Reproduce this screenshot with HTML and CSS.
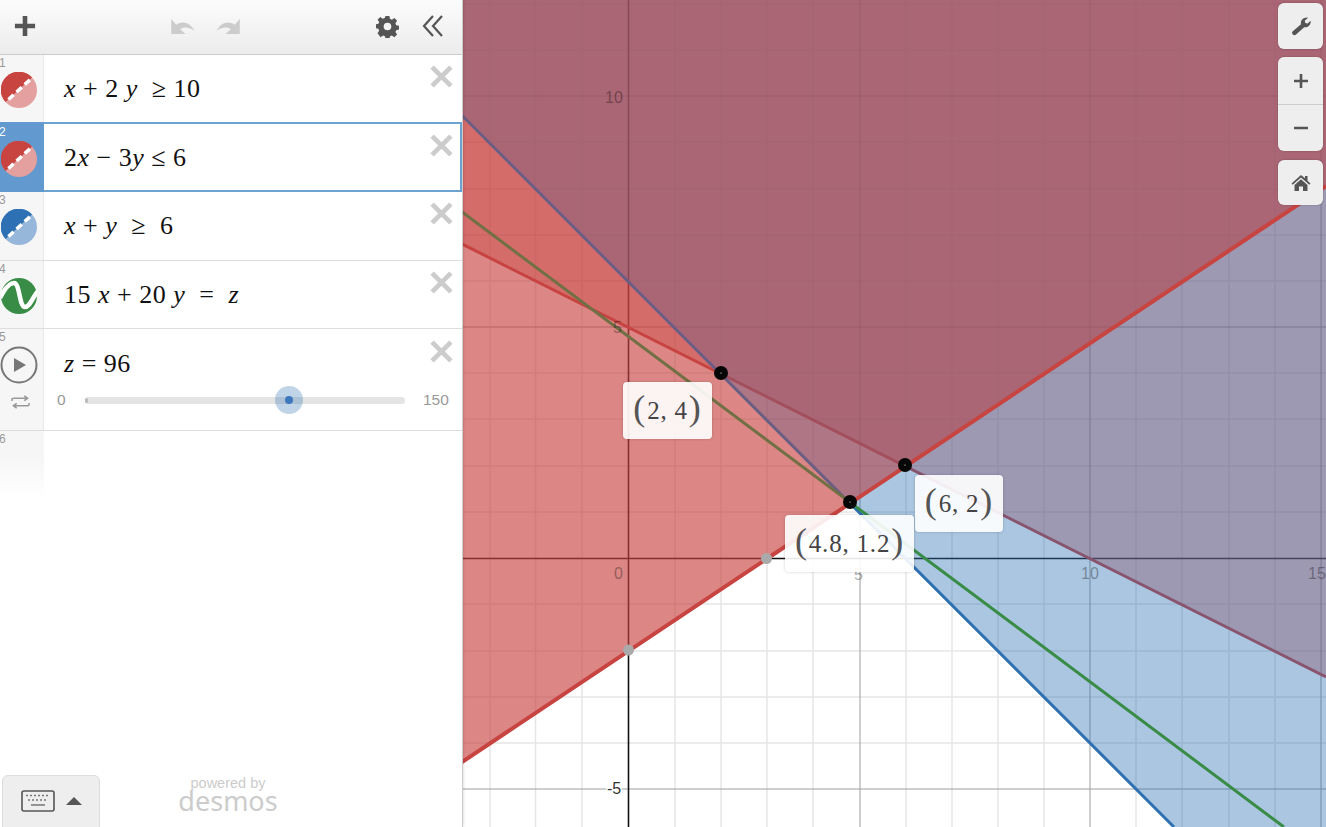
FILE: index.html
```html
<!DOCTYPE html>
<html lang="en">
<head>
<meta charset="utf-8">
<title>Desmos Graphing Calculator</title>
<link rel="stylesheet" href="styles.css">
</head>
<body>
<div class="app">
  <aside class="panel">
    <header class="toolbar">
      <svg class="ic add" viewBox="0 0 24 24"><path d="M9.500 1h5v8.500H23v5h-8.500V23h-5v-8.500H1v-5h8.500z"/></svg>
      <div class="undo">
        <svg class="ic hist" viewBox="0 0 28 18"><path d="M1 1v16h15l-5.500-5.200c3.500-2.800 9-2.500 15 1.700C22 6 13.500 1.800 6.300 7.200z"/></svg>
        <svg class="ic hist" viewBox="0 0 28 18"><path d="M27 1v16H12l5.500-5.200c-3.500-2.800-9-2.500-15 1.700C6 6 14.500 1.800 21.700 7.200z"/></svg>
      </div>
      <svg class="ic gear" viewBox="0 0 24 24"><path fill-rule="evenodd" d="M10 1h4l.6 3 2 .9 2.600-1.700 2.800 2.800-1.700 2.600.8 2 3 .6v4l-3 .6-.8 2 1.700 2.600-2.800 2.800-2.600-1.700-2 .8-.6 3h-4l-.6-3-2-.8-2.600 1.700L1.600 19l1.700-2.600-.8-2-3-.6v-4l3-.6.8-2L1.600 4.900l2.800-2.800L7 3.900l2-.9zM12 8a4 4 0 1 0 0 8 4 4 0 0 0 0-8z"/></svg>
      <svg class="ic collapse" viewBox="0 0 22 24"><path d="M11 2 2 12l9 10M20 2l-9 10 9 10"/></svg>
    </header>

    <section class="row">
      <div class="gutter"><span class="num">1</span>
        <svg class="swatch" viewBox="0 0 36 36"><circle cx="18" cy="18" r="18" fill="#e49f9f"/><path d="M4.500 30A18 18 0 0 1 31 5.500z" fill="#c74440"/><path d="M6 28.800 30 6.800" class="dash"/></svg>
      </div>
      <div class="expr"><span class="math"><i>x</i> + 2 <i>y</i> &nbsp;≥ 10</span></div>
      <svg class="close" viewBox="0 0 22 22"><path d="M2 2l18 18M20 2 2 20"/></svg>
    </section>

    <section class="row focus">
      <div class="gutter"><span class="num">2</span>
        <svg class="swatch" viewBox="0 0 36 36"><circle cx="18" cy="18" r="18" fill="#e49f9f"/><path d="M4.500 30A18 18 0 0 1 31 5.500z" fill="#c74440"/><path d="M6 28.800 30 6.800" class="dash"/></svg>
      </div>
      <div class="expr"><span class="math">2<i>x</i> − 3<i>y</i> ≤ 6</span></div>
      <svg class="close" viewBox="0 0 22 22"><path d="M2 2l18 18M20 2 2 20"/></svg>
    </section>

    <section class="row tall">
      <div class="gutter"><span class="num">3</span>
        <svg class="swatch" viewBox="0 0 36 36"><circle cx="18" cy="18" r="18" fill="#96b7d9"/><path d="M4.500 30A18 18 0 0 1 31 5.500z" fill="#2d70b3"/><path d="M6 28.800 30 6.800" class="dash"/></svg>
      </div>
      <div class="expr"><span class="math"><i>x</i> + <i>y</i> &nbsp;≥ &nbsp;6</span></div>
      <svg class="close" viewBox="0 0 22 22"><path d="M2 2l18 18M20 2 2 20"/></svg>
    </section>

    <section class="row">
      <div class="gutter"><span class="num">4</span>
        <svg class="swatch" viewBox="0 0 36 36"><circle cx="18" cy="18" r="18" fill="#388c46"/><path d="M-1 20C5 8 9 5 13 5c6 0 5 24 11 24 5 0 7-9 13-16" fill="none" stroke="#fff" stroke-width="4.500"/></svg>
      </div>
      <div class="expr"><span class="math">15 <i>x</i> + 20 <i>y</i> &nbsp;= &nbsp;<i>z</i></span></div>
      <svg class="close" viewBox="0 0 22 22"><path d="M2 2l18 18M20 2 2 20"/></svg>
    </section>

    <section class="row slider-row">
      <div class="gutter"><span class="num">5</span>
        <svg class="play" viewBox="0 0 38 38"><circle cx="19" cy="19" r="17.500"/><path d="M14 12v14l12-7z"/></svg>
        <svg class="loop" viewBox="0 0 20 14"><path d="M1 6V4.500C1 3.500 2 3 3 3h14M14 .5 17.500 3 14 5.500M19 8v1.500c0 1-1 1.500-2 1.500H3M6 8.500 2.500 11 6 13.500"/></svg>
      </div>
      <div class="expr slider-expr">
        <span class="math"><i>z</i> = 96</span>
        <div class="slider">
          <span class="lim lo">0</span>
          <div class="track"><span class="knob"></span></div>
          <span class="lim">150</span>
        </div>
      </div>
      <svg class="close" viewBox="0 0 22 22"><path d="M2 2l18 18M20 2 2 20"/></svg>
    </section>

    <section class="row empty">
      <div class="gutter"><span class="num">6</span></div>
    </section>

    <footer class="foot">
      <button class="kbd" type="button">
        <svg class="kbd-ic" viewBox="0 0 34 22"><rect x="1" y="1" width="32" height="20" rx="2"/><path class="keys" d="M5 5.500h2M9 5.500h2M13 5.500h2M17 5.500h2M21 5.500h2M25 5.500h2M7 10h2M11 10h2M15 10h2M19 10h2M23 10h2M10 15h14"/></svg>
        <span class="tri"></span>
      </button>
      <div class="brand"><span class="by">powered by</span><span class="name">desmos</span></div>
    </footer>
  </aside>

  <main class="graph">
    <svg class="plot" viewBox="0 0 863 827">
      <g class="minor">
        <path d="M27 0V827M72.500 0V827M119 0V827M212 0V827M258 0V827M304 0V827M350 0V827M443 0V827M489 0V827M535 0V827M581 0V827M673 0V827M719 0V827M766 0V827M812 0V827"/>
        <path d="M0 4H863M0 50H863M0 142H863M0 189H863M0 235H863M0 281H863M0 373H863M0 419H863M0 466H863M0 512H863M0 604H863M0 651H863M0 697H863M0 743H863"/>
      </g>
      <g class="major">
        <path d="M397 0V827M627 0V827M858 0V827M0 96H863M0 327H863M0 789H863"/>
      </g>
      <path class="axis" d="M165.500 0V827M0 558.500H863"/>
      <polygon class="sh red" points="0,762 863,186 863,0 0,0"/>
      <polygon class="sh red" points="0,244 863,677 863,0 0,0"/>
      <path class="ln red1" d="M-1 244 863 677"/>
      <polygon class="sh blue" points="0,115.500 711,827 863,827 863,0 0,0"/>
      <path class="ln blue" d="M-1 115.500 711 827"/>
      <path class="ln green" d="M-1 212 821 827"/>
      <polygon class="sh red" points="0,762 863,186 863,0 0,0"/>
      <path class="ln red2" d="M-1 762 863 186"/>
      <text class="tick" x="142" y="103">10</text>
      <text class="tick" x="150" y="333">5</text>
      <text class="tick" x="151" y="579">0</text>
      <text class="tick" x="391" y="580">5</text>
      <text class="tick" x="618" y="579">10</text>
      <text class="tick" x="845" y="579">15</text>
      <text class="tick dark" x="144" y="794">-5</text>
      <circle class="hole" cx="303.500" cy="558.500" r="5.500"/>
      <circle class="hole" cx="165.500" cy="650" r="5.500"/>
      <circle class="pt" cx="258" cy="373" r="7"/><circle class="ptc" cx="258" cy="373" r=".6"/>
      <circle class="pt" cx="442" cy="465" r="7"/><circle class="ptc" cx="442" cy="465" r=".6"/>
      <circle class="pt" cx="387" cy="502" r="7"/><circle class="ptc" cx="387" cy="502" r=".6"/>
    </svg>
    <div class="tag tag-a"><b>(</b>2, 4<b>)</b></div>
    <div class="tag tag-b"><b>(</b>6, 2<b>)</b></div>
    <div class="tag tag-c"><b>(</b>4.8, 1.2<b>)</b></div>
    <div class="tools">
      <button class="tool" type="button">
        <svg class="t-ic" viewBox="0 0 20 20"><path d="M1.500 15.500 10 8.200c-.8-3 1.500-6.700 6-6.700l1 .3-3.300 3 .6 2.200 2.300.6 3-2.800c.6 4-2.900 7-6.400 6.400L4.800 18.700c-2 1.500-4.800-1.300-3.300-3.200z"/></svg>
      </button>
      <div class="zoom">
        <button class="tool flat" type="button"><svg class="t-ic" viewBox="0 0 20 20"><path d="M8.700 3h2.600v5.700H17v2.600h-5.700V17H8.700v-5.700H3V8.700h5.700z"/></svg></button>
        <button class="tool flat sep" type="button"><svg class="t-ic" viewBox="0 0 20 20"><path d="M3 8.700h14v2.600H3z"/></svg></button>
      </div>
      <button class="tool home" type="button">
        <svg class="t-ic" viewBox="0 0 20 20"><path d="M10 2 0.500 10.500l1.200 1.200L10 4.500l8.300 7.200 1.200-1.200-3-2.700V3h-2.500v2.300zM3.500 12l6.500-5.700 6.500 5.700v6h-4.500v-4.500H8V18H3.500z"/></svg>
      </button>
    </div>
  </main>
</div>
</body>
</html>
```
FILE: styles.css
```css
* { box-sizing: border-box; }
html, body { margin: 0; height: 100%; overflow: hidden; }
body { font-family: "Liberation Sans", Arial, sans-serif; background: #fff; }
.app { display: flex; width: 1326px; height: 827px; }

.panel { position: relative; flex: 0 0 463px; min-width: 0; display: flex; flex-direction: column; background: #fff; border-right: 1px solid #ccc; box-shadow: 0 0 3px rgba(0,0,0,.2); z-index: 2; }
.toolbar { flex: 0 0 55px; display: flex; align-items: center; padding: 0 18px 2px 14px; background: linear-gradient(#fcfcfc, #ececec); border-bottom: 1px solid #ccc; }
.ic { display: block; fill: #555; }
.add { flex: none; width: 22px; height: 22px; }
.undo { flex: none; display: flex; gap: 17px; margin-left: 134px; }
.hist { width: 27px; height: 17px; fill: #ccc; }
.gear { flex: none; width: 23px; height: 23px; margin-left: 135px; }
.collapse { flex: none; width: 22px; height: 24px; margin-left: 23px; fill: none; stroke: #555; stroke-width: 2.200; }

.row { position: relative; display: flex; height: 68px; flex: 0 0 68px; border-bottom: 1px solid #ddd; }
.tall { height: 69px; flex-basis: 69px; }
.gutter { position: relative; flex: 0 0 44px; background: #f6f6f6; border-right: 1px solid #e8e8e8; }
.num { position: absolute; left: -1px; top: 1px; font-size: 12px; line-height: 14px; color: #999; }
.swatch { position: absolute; left: 1px; top: 17px; width: 36px; height: 36px; }
.dash { fill: none; stroke: #fff; stroke-width: 3.500; stroke-dasharray: 7 4; stroke-dashoffset: -2; }
.expr { flex: 1; padding: 17px 0 0 20px; }
.math { font-family: "Liberation Serif", "Times New Roman", serif; font-size: 26px; line-height: 34px; letter-spacing: .5px; color: #111; white-space: pre; }
.close { position: absolute; left: 430px; top: 10px; width: 23px; height: 23px; fill: none; stroke: #ccc; stroke-width: 4.500; }

.focus { margin-top: -1px; height: 70px; flex-basis: 70px; outline: 2px solid #6da3d3; outline-offset: -2px; border-bottom: 0; z-index: 1; }
.focus .gutter { background: #6299cf; border-right: 0; }
.focus .num { color: #fff; top: 3px; }
.focus .swatch { top: 19px; }
.focus .expr { padding-top: 19px; }
.focus .close { top: 12px; }

.slider-row { height: 102px; flex-basis: 102px; }
.slider-expr { padding-top: 18px; padding-left: 20px; }
.slider-row .close { top: 11px; }
.play { position: absolute; left: 0; top: 17px; width: 38px; height: 38px; fill: none; stroke: #777; stroke-width: 2; }
.play path { fill: #777; stroke: none; }
.loop { position: absolute; left: 11px; top: 66px; width: 19px; height: 14px; fill: none; stroke: #999; stroke-width: 1.600; }
.slider { display: flex; align-items: center; margin: 7px 0 0 -7px; height: 24px; }
.lim { font-size: 15.500px; color: #999; }
.lo { width: 28px; }
.track { position: relative; width: 320px; height: 7px; border-radius: 4px; background: #e4e4e4; margin-right: 18px; }
.track::before { content: ""; position: absolute; left: 0; top: 1px; width: 3px; height: 5px; border-radius: 2px; background: #bbb; }
.knob { position: absolute; left: 190px; top: -11px; width: 28px; height: 28px; border-radius: 50%; background: rgba(45,112,179,.3); }
.knob::after { content: ""; position: absolute; left: 10px; top: 10px; width: 8px; height: 8px; border-radius: 50%; background: #3d77bd; }

.empty { flex: 0 0 66px; border: 0; }
.empty .gutter { background: linear-gradient(#f6f6f6 40%, #fff); border-right-color: transparent; }

.foot { position: relative; flex: 1; }
.kbd { position: absolute; left: 2px; bottom: -1px; width: 98px; height: 53px; display: flex; align-items: center; justify-content: center; gap: 11px; padding: 0 0 2px; background: #eee; border: 1px solid #ddd; border-radius: 6px 6px 0 0; }
.kbd-ic { width: 34px; height: 22px; fill: none; stroke: #555; stroke-width: 1.600; }
.keys { stroke-width: 1.400; stroke: #777; }
.tri { width: 0; height: 0; border: 8px solid transparent; border-top: 0; border-bottom: 8px solid #555; }
.brand { position: absolute; left: 178px; bottom: 15px; width: 100px; display: flex; flex-direction: column; align-items: center; color: #ccc; }
.by { font-size: 14.500px; line-height: 13px; }
.name { font-size: 27px; line-height: 22px; font-family: "Noto Sans", sans-serif; }

.graph { position: relative; flex: 1; min-width: 0; overflow: hidden; background: #fff; }
.plot { display: block; width: 863px; height: 827px; }
.minor path { fill: none; stroke: #e6e6e6; stroke-width: 1.500; }
.major path { fill: none; stroke: #9e9e9e; stroke-width: 1; }
.axis { fill: none; stroke: #111; stroke-width: 1.600; }
.ln { fill: none; stroke-width: 3; }
.ln.blue { stroke: #2d70b3; }
.ln.green { stroke: #388c46; }
.ln.red1 { stroke: #c74440; }
.ln.red2 { stroke: #c74440; stroke-width: 4; }
.sh { stroke: none; opacity: .4; }
.sh.red { fill: #c74440; }
.sh.blue { fill: #2d70b3; }
.tick { font-family: "Liberation Sans", Arial, sans-serif; font-size: 16px; fill: #000; opacity: .32; }
.tick.dark { opacity: 1; fill: #333; paint-order: stroke; stroke: #fff; stroke-width: 3px; }
.hole { fill: #aaa; }
.pt { fill: #060606; }
.ptc { fill: #fff; }

.tag { position: absolute; display: flex; align-items: center; justify-content: center; height: 57px; background: rgba(255,255,255,.9); border-radius: 4px; box-shadow: 0 0 3px rgba(0,0,0,.2); font-family: "Liberation Serif", "Times New Roman", serif; font-size: 25px; color: #444; white-space: pre; letter-spacing: .8px; }
.tag b { font-weight: 400; font-size: 36px; line-height: 36px; margin: -5px 1px 0; color: #555; }
.tag-a { left: 160px; top: 382px; width: 89px; }
.tag-b { left: 452px; top: 475px; width: 88px; }
.tag-c { left: 322px; top: 515px; width: 129px; }

.tools { position: absolute; right: 3px; top: 3px; width: 45px; display: flex; flex-direction: column; gap: 8px; }
.zoom { border-radius: 6px; overflow: hidden; margin-bottom: 1px; box-shadow: 0 0 2px rgba(0,0,0,.3); }
.tool { display: flex; align-items: center; justify-content: center; width: 45px; height: 46px; padding: 0; background: #eee; border: 0; border-radius: 6px; box-shadow: 0 0 2px rgba(0,0,0,.3); }
.tool.flat { height: 47px; border-radius: 0; box-shadow: none; }
.tool.sep { border-top: 1px solid #ccc; }
.tool.home { height: 45px; }
.t-ic { width: 20px; height: 20px; fill: #555; }
```
